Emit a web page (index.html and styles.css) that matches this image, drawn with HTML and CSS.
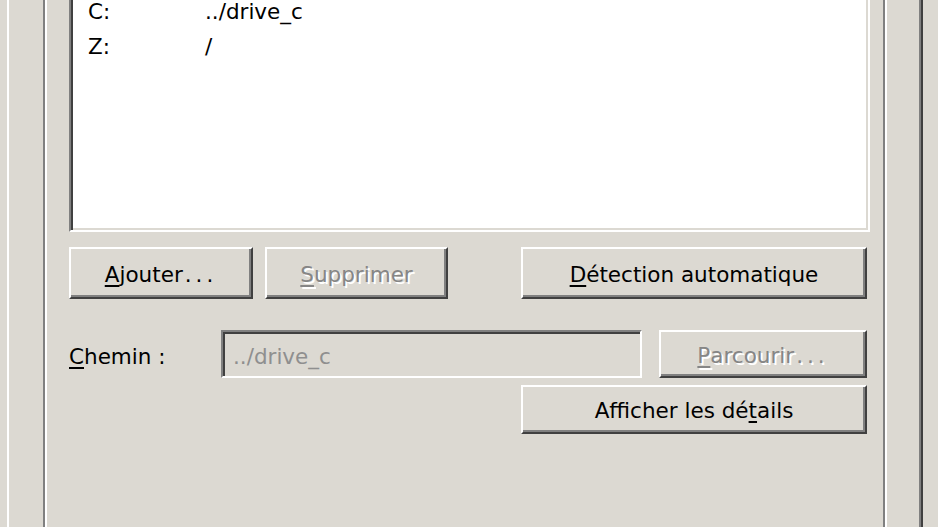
FILE: index.html
```html
<!DOCTYPE html>
<html lang="fr">
<head>
  <meta charset="UTF-8" />
  <meta name="viewport" content="width=device-width, initial-scale=1" />
  <title>Lecteurs</title>

  <!-- Stylesheet -->
  <link rel="stylesheet" href="styles.css">
</head>
<body>
  <div class="tab">
    <div class="group">
      <div class="listbox">
        <div class="row"><span class="col-letter">C:</span><span>../drive_c</span></div>
        <div class="row"><span class="col-letter">Z:</span><span>/</span></div>
      </div>

      <div class="btn-row">
        <button class="btn btn-add"><u>A</u>jouter<span class="dots">...</span></button>
        <button class="btn btn-del" disabled><u>S</u>upprimer</button>
        <button class="btn btn-auto"><u>D</u>étection automatique</button>
      </div>

      <div class="path-row">
        <label class="path-label"><u>C</u>hemin :</label>
        <div class="field">../drive_c</div>
        <button class="btn btn-browse" disabled><u>P</u>arcourir<span class="dots">...</span></button>
      </div>

      <div class="details-row">
        <button class="btn btn-details">Afficher les dé<u>t</u>ails</button>
      </div>
    </div>
  </div>
</body>
</html>
```

FILE: styles.css
```css
body {
  margin: 0;
  height: 527px;
  overflow: hidden;
  background: #dcd9d2;
  font-family: "DejaVu Sans", sans-serif;
  font-size: 21.5px;
  color: #000;
}

u {
  text-decoration-thickness: 2px;
  text-underline-offset: 3px;
}

.dots {
  letter-spacing: 4px;
  margin-left: 2px;
}

/* tab page frame */
.tab {
  margin-left: 7px;
  width: 916px;
  height: 527px;
  box-sizing: border-box;
  border-left: 2px solid #fff;
  border-right: 2px solid #404040;
  box-shadow: inset -2px 0 #808080;
  padding-left: 34px;
}

/* etched group box */
.group {
  width: 844px;
  height: 527px;
  box-sizing: border-box;
  border-left: 2px solid #808080;
  border-right: 2px solid #fff;
  box-shadow: inset 2px 0 #fff, inset -2px 0 #808080;
  padding-left: 24px;
}

/* drive list */
.listbox {
  width: 801px;
  height: 232px;
  box-sizing: border-box;
  background: #fff;
  border-left: 2px solid #808080;
  border-right: 2px solid #fff;
  border-bottom: 2px solid #fff;
  box-shadow: inset 2px 0 #404040, inset -2px -2px #dcd9d2;
  padding-left: 17px;
  overflow: hidden;
}

.row {
  display: flex;
  height: 35px;
  line-height: 35px;
}
.row:first-child {
  margin-top: -6px;
}

.col-letter {
  width: 117px;
}

/* buttons */
.btn {
  box-sizing: border-box;
  height: 52px;
  padding: 2px 0 0;
  background: #dcd9d2;
  border: 2px solid;
  border-color: #fff #404040 #404040 #fff;
  box-shadow: inset -2px -2px #808080;
  font: inherit;
  color: #000;
  display: flex;
  align-items: center;
  justify-content: center;
}

.btn:disabled {
  color: #868686;
  text-shadow: 2px 2px 0 #fff;
}

.btn-row {
  display: flex;
  margin-top: 15px;
}

.btn-add {
  width: 184px;
}
.btn-del {
  width: 183px;
  margin-left: 12px;
}
.btn-auto {
  width: 346px;
  margin-left: 73px;
}

/* path */
.path-row {
  display: flex;
  margin-top: 31px;
}

.path-label {
  width: 152px;
  height: 48px;
  box-sizing: border-box;
  padding-top: 4px;
  display: flex;
  align-items: center;
}

.field {
  width: 421px;
  height: 48px;
  box-sizing: border-box;
  border: 2px solid;
  border-color: #808080 #fff #fff #808080;
  box-shadow: inset 2px 2px #404040, inset -2px -2px #dcd9d2;
  padding: 4px 0 0 10px;
  color: #8f8f8f;
  display: flex;
  align-items: center;
}

.btn-browse {
  width: 208px;
  height: 48px;
  margin-left: 17px;
}

.details-row {
  margin-top: 7px;
  padding-left: 452px;
}

.btn-details {
  width: 346px;
  height: 49px;
}
```
